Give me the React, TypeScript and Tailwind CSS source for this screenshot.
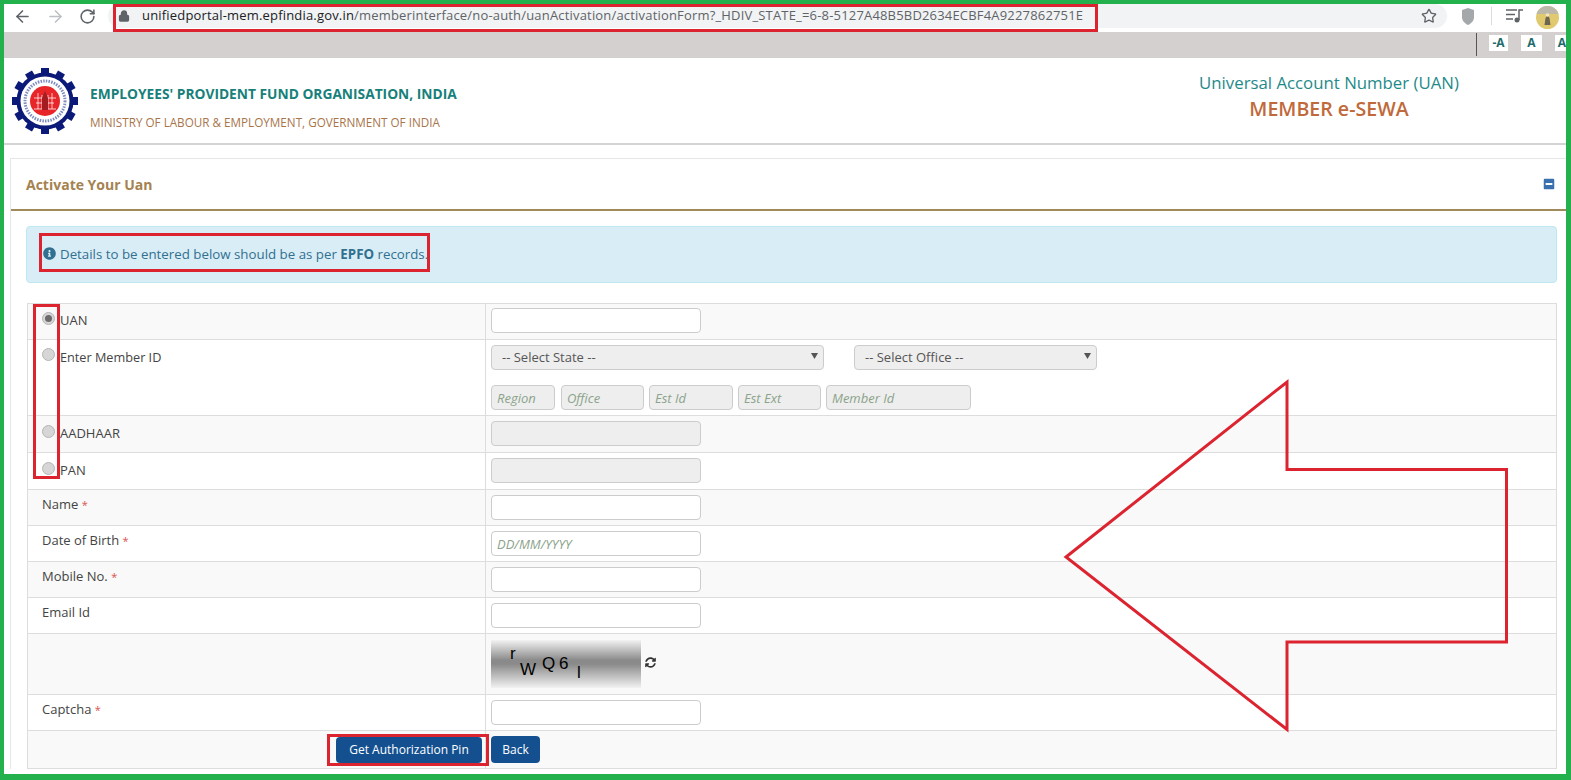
import { ArrowLeft, ArrowRight, RotateCw, Lock, Star } from "lucide-react";
import { FaInfoCircle, FaMinusSquare, FaSyncAlt } from "react-icons/fa";
import type { ReactNode } from "react";

const inputCls =
  "block h-[25px] rounded-[4px] border border-[#ccc] bg-white px-[5px] text-[13px] outline-none placeholder:italic placeholder:text-[#8ba38b]";
const lockedCls =
  "block h-[25px] rounded-[4px] border border-[#ccc] bg-[#eee] px-[5px] text-[13px] outline-none placeholder:italic placeholder:text-[#8ba38b]";

function Logo() {
  const teeth = [0, 30, 60, 90, 120, 150, 180, 210, 240, 270, 300, 330];
  return (
    <svg width="66" height="66" viewBox="0 0 66 66" className="shrink-0">
      {teeth.map((a) => (
        <rect key={a} x="29" y="0" width="8" height="8" fill="#0b1a78" transform={`rotate(${a} 33 33)`} />
      ))}
      <circle cx="33" cy="33" r="28.5" fill="#0b1a78" />
      <circle cx="33" cy="33" r="24.5" fill="#fff" />
      <circle cx="33" cy="33" r="20" fill="none" stroke="#7f8cc0" strokeWidth="3" strokeDasharray="1.5 1.2" />
      <circle cx="33" cy="33" r="15" fill="#e8262a" />
      <path d="M22 30h22M24 35h18M22 41h22" stroke="#fff" strokeWidth="1.200" opacity="0.75" />
      <path d="M26 25v16M30 27v14M36 27v14M40 25v16" stroke="#fff" strokeWidth="1.200" opacity="0.6" />
      <path d="M33 23l3 7v12h-6V30z" fill="#a11d22" />
    </svg>
  );
}

function Avatar() {
  return (
    <svg width="23" height="23" viewBox="0 0 23 23">
      <circle cx="11.5" cy="11.5" r="11.5" fill="#e0c96f" />
      <path d="M.5 8a11.500 11.500 0 0 1 22 0z" fill="#bdb9aa" />
      <path d="M8.500 19l1-7 2-3 2 3 1 7z" fill="#6d6550" />
      <circle cx="11.5" cy="9" r="1.800" fill="#f0e6c8" />
    </svg>
  );
}

function Radio({ on }: { on?: boolean }) {
  return (
    <span className="mr-[5px] mt-[-1px] flex size-[13px] shrink-0 items-center justify-center rounded-full border border-[#b5b5b5] bg-[#d6d6d6]">
      {on && <span className="size-[7px] rounded-full bg-[#6b6b6b]" />}
    </span>
  );
}

function Row({
  h,
  striped,
  left,
  leftCls,
  children,
}: {
  h: string;
  striped?: boolean;
  left?: ReactNode;
  leftCls: string;
  children: ReactNode;
}) {
  return (
    <div className={`flex border-b border-[#ddd] ${h} ${striped ? "bg-[#f9f9f9]" : "bg-white"}`}>
      <div className={`flex w-[458px] shrink-0 items-start border-r border-[#ddd] pl-[14px] ${leftCls}`}>{left}</div>
      <div className="min-w-0 flex-1 pl-[5px] pt-[4px]">{children}</div>
    </div>
  );
}

function Req({ label }: { label: string }) {
  return (
    <span>
      {label} <span className="text-[11px] text-[#d9534f]">*</span>
    </span>
  );
}

function FakeSelect({ label, w }: { label: string; w: string }) {
  return (
    <div className={`flex h-[25px] items-center justify-between rounded-[4px] border border-[#ccc] bg-[#eee] pl-[10px] pr-[5px] text-[13px] text-[#555] ${w}`}>
      <span>{label}</span>
      <svg width="7" height="6" viewBox="0 0 7 6" className="mt-[-3px]">
        <path d="M0 0h7L3.500 6z" fill="#555" />
      </svg>
    </div>
  );
}

export default function App() {
  return (
    <div className="relative box-border h-[780px] w-full overflow-hidden border-b-[6px] border-l-4 border-r-[5px] border-t-4 border-[#22b14c] bg-white font-['Open_Sans',sans-serif] text-[13px] text-[#444]">
      {/* browser toolbar */}
      <div className="flex h-[28px] items-center bg-white pb-[4px]">
        <ArrowLeft size={19} strokeWidth={2} className="ml-[9px] text-[#5f6368]" />
        <ArrowRight size={19} strokeWidth={2} className="ml-[14px] text-[#bcc0c4]" />
        <RotateCw size={17} strokeWidth={2.2} className="ml-[14px] text-[#5f6368]" />
        <div className="ml-[12px] flex h-[24px] w-[1339px] items-center rounded-full bg-[#f1f3f4] pl-[10px]">
          <Lock size={12} strokeWidth={2.6} fill="currentColor" className="text-[#5f6368]" />
          <span className="ml-[12px] whitespace-nowrap text-[13px] tracking-[0.18px] text-[#5f6368]">
            <span className="text-[#202124]">unifiedportal-mem.epfindia.gov.in</span>
            /memberinterface/no-auth/uanActivation/activationForm?_HDIV_STATE_=6-8-5127A48B5BD2634ECBF4A9227862751E
          </span>
          <Star size={16} strokeWidth={2} className="ml-auto mr-[10px] text-[#5f6368]" />
        </div>
        <svg width="14" height="17" viewBox="0 0 14 17" className="ml-[14px]">
          <path d="M7 0l6 2v7c0 4-3 6.500-6 8-3-1.500-6-4-6-8V2z" fill="#a5a8aa" />
        </svg>
        <span className="ml-[16px] h-[18px] w-px bg-[#dadce0]" />
        <svg width="18" height="14" viewBox="0 0 18 14" className="ml-[14px] text-[#5f6368]">
          <path d="M0 1h11M0 5.500h9M0 10h7" stroke="currentColor" strokeWidth="1.500" />
          <path d="M13 11V1h4" stroke="currentColor" strokeWidth="1.500" fill="none" />
          <circle cx="11" cy="11" r="2.500" fill="currentColor" />
        </svg>
        <div className="ml-[12px] mt-[2px]">
          <Avatar />
        </div>
      </div>

      {/* font size strip */}
      <div className="flex h-[26px] items-start overflow-hidden bg-[#d3d0cf] pl-[1472px]">
        <span className="mt-[1px] h-[23px] w-px shrink-0 bg-[#555]" />
        <span className="ml-[12px] mt-[3px] flex h-[16px] w-[19px] shrink-0 items-center justify-center bg-white text-[12px] font-bold text-[#1d6b6b]">-A</span>
        <span className="ml-[13px] mt-[3px] flex h-[16px] w-[21px] shrink-0 items-center justify-center bg-white text-[12px] font-bold text-[#1d6b6b]">A</span>
        <span className="ml-[13px] mt-[3px] flex h-[16px] w-[11px] shrink-0 items-center justify-end bg-white text-[12px] font-bold text-[#1d6b6b]">A</span>
      </div>

      {/* site header */}
      <div className="box-content flex h-[85px] items-center border-b-2 border-[#d4d4d4] pl-[8px]">
        <Logo />
        <div className="ml-[12px] mt-[14px]">
          <div className="whitespace-nowrap text-[13.75px] font-bold leading-[18px] text-[#17807a]">EMPLOYEES' PROVIDENT FUND ORGANISATION, INDIA</div>
          <div className="mt-[10px] whitespace-nowrap text-[11.7px] leading-[18px] text-[#a8744a]">MINISTRY OF LABOUR &amp; EMPLOYMENT, GOVERNMENT OF INDIA</div>
        </div>
        <div className="ml-auto mr-[107px] mt-[-8px] w-[260px] text-center">
          <div className="whitespace-nowrap text-[16.8px] font-medium leading-[24px] text-[#1f8a8a]">Universal Account Number (UAN)</div>
          <div className="mt-[1px] whitespace-nowrap text-[19.6px] font-semibold leading-[26px] text-[#c0693a]">MEMBER e-SEWA</div>
        </div>
      </div>

      {/* panel */}
      <div className="ml-[6px] mt-[13px] border-l border-t border-[#e6e6e6]">
        <div className="flex h-[50px] items-center justify-between pl-[15px] pr-[11px]">
          <span className="text-[14px] font-bold text-[#a5824f]">Activate Your Uan</span>
          <FaMinusSquare size={12} className="mt-[-1px] text-[#3a70ad]" />
        </div>
        <div className="h-[2px] bg-[#a08a5a]" />
        <div className="pl-[15px] pr-[9px] pt-[15px]">
          <div className="flex h-[57px] items-center rounded-[4px] border border-[#bce8f1] bg-[#d9edf7] pl-[16px] text-[13.3px] text-[#31708f]">
            <FaInfoCircle size={13} className="mr-[4px] mt-[-3px]" />
            <span>
              Details to be entered below should be as per <b>EPFO</b> records.
            </span>
          </div>

          <div className="ml-px mt-[20px] border-l border-r border-t border-[#ddd]">
            <Row h="h-[36px]" striped leftCls="pt-[7px]" left={<><span className="mt-[2px]"><Radio on /></span>UAN</>}>
              <input className={`${inputCls} w-[210px]`} />
            </Row>
            <Row h="h-[76px]" leftCls="pt-[8px]" left={<><span className="mt-[1px]"><Radio /></span><span className="text-[12.7px]">Enter Member ID</span></>}>
              <div className="flex pt-px">
                <FakeSelect label="-- Select State --" w="w-[333px]" />
                <FakeSelect label="-- Select Office --" w="ml-[30px] w-[243px]" />
              </div>
              <div className="mt-[15px] flex">
                <input className={`${lockedCls} w-[64px]`} placeholder="Region" />
                <input className={`${lockedCls} ml-[6px] w-[83px]`} placeholder="Office" />
                <input className={`${lockedCls} ml-[5px] w-[84px]`} placeholder="Est Id" />
                <input className={`${lockedCls} ml-[5px] w-[83px]`} placeholder="Est Ext" />
                <input className={`${lockedCls} ml-[5px] w-[145px]`} placeholder="Member Id" />
              </div>
            </Row>
            <Row h="h-[37px]" striped leftCls="pt-[8px]" left={<><span className="mt-[2px]"><Radio /></span>AADHAAR</>}>
              <div className="pt-px">
                <input className={`${lockedCls} w-[210px]`} />
              </div>
            </Row>
            <Row h="h-[37px]" leftCls="pt-[8px]" left={<><span className="mt-[2px]"><Radio /></span>PAN</>}>
              <div className="pt-px">
                <input className={`${lockedCls} w-[210px]`} />
              </div>
            </Row>
            <Row h="h-[36px]" striped leftCls="pt-[5px]" left={<Req label="Name" />}>
              <div className="pt-px">
                <input className={`${inputCls} w-[210px]`} />
              </div>
            </Row>
            <Row h="h-[36px]" leftCls="pt-[5px]" left={<Req label="Date of Birth" />}>
              <div className="pt-px">
                <input className={`${inputCls} w-[210px]`} placeholder="DD/MM/YYYY" />
              </div>
            </Row>
            <Row h="h-[36px]" striped leftCls="pt-[5px]" left={<Req label="Mobile No." />}>
              <div className="pt-px">
                <input className={`${inputCls} w-[210px]`} />
              </div>
            </Row>
            <Row h="h-[36px]" leftCls="pt-[5px]" left="Email Id">
              <div className="pt-px">
                <input className={`${inputCls} w-[210px]`} />
              </div>
            </Row>
            <Row h="h-[61px]" striped leftCls="">
              <div className="flex items-center pt-[2px]">
                <div className="relative h-[48px] w-[150px] bg-[linear-gradient(to_bottom,#f2f2f2,#8a8a8a_42%,#8a8a8a_50%,#f2f2f2)] font-['Liberation_Sans',sans-serif] text-[17px] leading-none text-black">
                  <span className="absolute left-[19px] top-[5px]">r</span>
                  <span className="absolute left-[29px] top-[21px]">W</span>
                  <span className="absolute left-[51px] top-[15px]">Q</span>
                  <span className="absolute left-[68px] top-[15px]">6</span>
                  <span className="absolute left-[86px] top-[24px]">l</span>
                </div>
                <FaSyncAlt size={11} className="ml-[4px] mt-[-4px] text-[#333]" />
              </div>
            </Row>
            <Row h="h-[36px]" leftCls="pt-[5px]" left={<Req label="Captcha" />}>
              <div className="pt-px">
                <input className={`${inputCls} w-[210px]`} />
              </div>
            </Row>
            <Row h="h-[38px]" striped leftCls="justify-end pr-[3px] pt-[6px]" left={
              <button className="h-[26px] w-[146px] rounded-[4px] bg-[#14508f] text-[12px] font-medium text-white">Get Authorization Pin</button>
            }>
              <button className="mt-px h-[27px] w-[49px] rounded-[4px] bg-[#14508f] text-[12px] font-medium text-white">Back</button>
            </Row>
          </div>
        </div>
      </div>

      {/* red annotations drawn over the page */}
      <div className="pointer-events-none absolute left-[109px] top-0 h-[28px] w-[985px] border-[3px] border-[#dc2430]" />
      <div className="pointer-events-none absolute left-[35px] top-[229px] h-[39px] w-[391px] border-[3px] border-[#dc2430]" />
      <div className="pointer-events-none absolute left-[29px] top-[300px] h-[175px] w-[27px] border-[3px] border-[#dc2430]" />
      <div className="pointer-events-none absolute left-[323px] top-[730px] h-[32px] w-[162px] border-[3px] border-[#dc2430]" />
      <svg className="pointer-events-none absolute left-[-4px] top-[-4px]" width="1571" height="780">
        <path d="M1066 557 L1287 382 V469.500 H1506.500 V642 H1287 V729.500 Z" fill="none" stroke="#dc2430" strokeWidth="3" />
      </svg>
    </div>
  );
}
